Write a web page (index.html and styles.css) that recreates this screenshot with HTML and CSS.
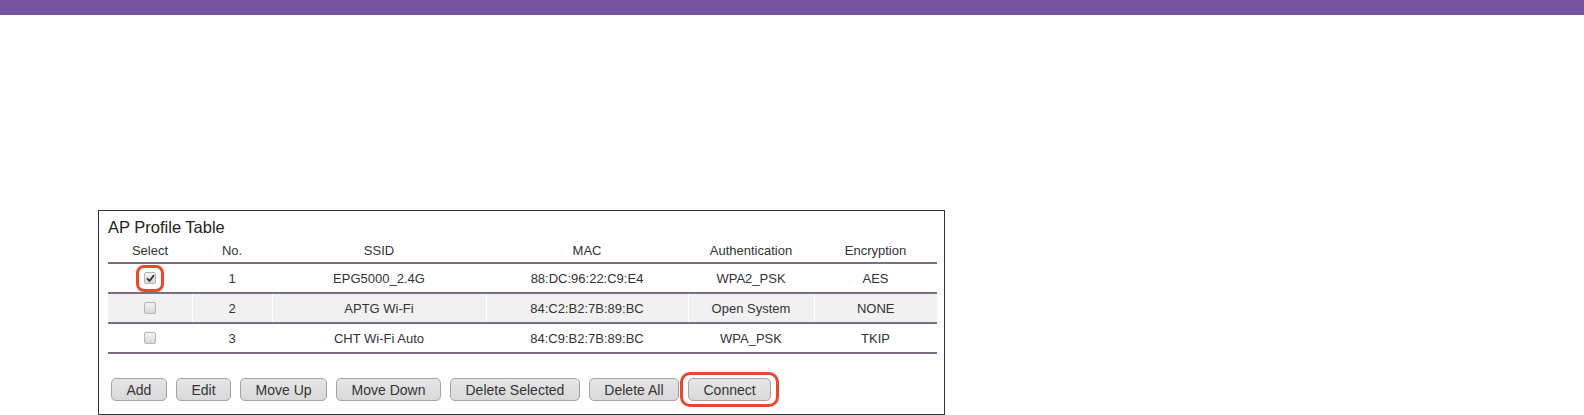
FILE: index.html
```html
<!DOCTYPE html>
<html lang="en">
<head>
  <meta charset="UTF-8">
  <title>AP Profile Table</title>
  <link rel="stylesheet" href="styles.css">
</head>
<body>
  <!-- Top bar -->
  <div class="topbar"></div>

  <!-- AP profile panel -->
  <div class="panel">
    <div class="panel-title">AP Profile Table</div>
    <table class="profiles">
      <colgroup>
        <col class="c-select">
        <col class="c-no">
        <col class="c-ssid">
        <col class="c-mac">
        <col class="c-auth">
        <col class="c-enc">
      </colgroup>
      <tr>
        <th>Select</th>
        <th>No.</th>
        <th>SSID</th>
        <th>MAC</th>
        <th>Authentication</th>
        <th>Encryption</th>
      </tr>
      <tr>
        <td><span class="check marked"><svg width="9" height="9" viewBox="0 0 9 9"><path d="M1.5 4.8 L3.6 7 L7.6 1.6" fill="none" stroke="#333" stroke-width="1.8" stroke-linecap="round" stroke-linejoin="round"/></svg></span></td>
        <td>1</td>
        <td>EPG5000_2.4G</td>
        <td>88:DC:96:22:C9:E4</td>
        <td>WPA2_PSK</td>
        <td>AES</td>
      </tr>
      <tr class="alt">
        <td><span class="check"></span></td>
        <td>2</td>
        <td>APTG Wi-Fi</td>
        <td>84:C2:B2:7B:89:BC</td>
        <td>Open System</td>
        <td>NONE</td>
      </tr>
      <tr>
        <td><span class="check"></span></td>
        <td>3</td>
        <td>CHT Wi-Fi Auto</td>
        <td>84:C9:B2:7B:89:BC</td>
        <td>WPA_PSK</td>
        <td>TKIP</td>
      </tr>
    </table>

    <div class="actions">
      <button>Add</button>
      <button>Edit</button>
      <button>Move Up</button>
      <button>Move Down</button>
      <button>Delete Selected</button>
      <button>Delete All</button>
      <button class="marked">Connect</button>
    </div>
  </div>
</body>
</html>
```

FILE: styles.css
```css
* {
  margin: 0;
  padding: 0;
  box-sizing: border-box;
}

body {
  font-family: "Liberation Sans", Arial, sans-serif;
  background: #fff;
  color: #333;
}

.topbar {
  height: 15px;
  background-color: #76529e;
}

.panel {
  width: 847px;
  height: 205px;
  margin: 195px 0 0 98px;
  padding: 7px 0 0 9px;
  border: 1px solid #333;
}

.panel-title {
  font-size: 16.5px;
  line-height: 19px;
  color: #222;
}

.profiles {
  width: 829px;
  table-layout: fixed;
  border-collapse: collapse;
  font-size: 13px;
  margin-top: 1px;
}

.c-select { width: 84px; }
.c-no { width: 80px; }
.c-ssid { width: 214px; }
.c-mac { width: 202px; }
.c-auth { width: 126px; }
.c-enc { width: 123px; }

.profiles th {
  font-weight: normal;
  height: 25px;
  text-align: center;
  vertical-align: middle;
  border-bottom: 2px solid #7d6c84;
}

.profiles td {
  height: 30px;
  text-align: center;
  vertical-align: middle;
  border-bottom: 2px solid #7d6c84;
}

.profiles tr.alt td {
  background-color: #f1f1f1;
  border-left: 1px solid #fff;
}

.profiles tr.alt td:first-child {
  border-left: none;
}

.check {
  display: inline-block;
  position: relative;
  width: 12px;
  height: 12px;
  border: 1px solid #b4b4b4;
  border-radius: 2px;
  background: linear-gradient(#f4f4f4, #d9d9d9);
  vertical-align: middle;
  margin-top: -2px;
}

.check svg {
  display: block;
  margin: 1px 0 0 1px;
}

.check.marked::after {
  content: "";
  position: absolute;
  top: -8px;
  bottom: -9px;
  left: -9px;
  right: -9px;
  border: 3px solid #e9472b;
  border-radius: 8px;
}

.actions {
  display: flex;
  gap: 9px;
  margin-top: 24px;
  padding-left: 3px;
}

.actions button {
  position: relative;
  height: 23px;
  padding: 0 14.5px;
  font-family: "Liberation Sans", Arial, sans-serif;
  font-size: 14px;
  color: #333;
  background: linear-gradient(#e6e6e6, #d9d9d9);
  border: 1px solid #a3a3a3;
  border-radius: 5px;
}

.actions button.marked::after {
  content: "";
  position: absolute;
  top: -7px;
  bottom: -7px;
  left: -9px;
  right: -9px;
  border: 3px solid #e9472b;
  border-radius: 10px;
}
```
